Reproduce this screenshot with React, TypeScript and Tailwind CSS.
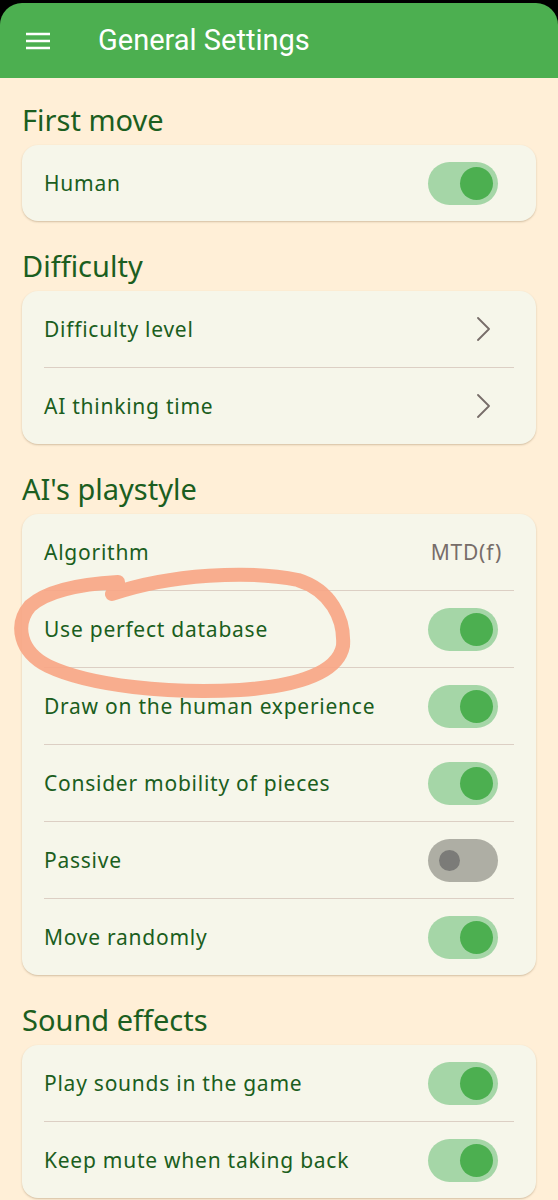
import React from "react"

type Row =
  | { label: string; kind: "toggle"; on: boolean }
  | { label: string; kind: "chevron" }
  | { label: string; kind: "value"; value: string }

const SECTIONS: { title: string; rows: Row[] }[] = [
  { title: "First move", rows: [{ label: "Human", kind: "toggle", on: true }] },
  {
    title: "Difficulty",
    rows: [
      { label: "Difficulty level", kind: "chevron" },
      { label: "AI thinking time", kind: "chevron" },
    ],
  },
  {
    title: "AI's playstyle",
    rows: [
      { label: "Algorithm", kind: "value", value: "MTD(f)" },
      { label: "Use perfect database", kind: "toggle", on: true },
      { label: "Draw on the human experience", kind: "toggle", on: true },
      { label: "Consider mobility of pieces", kind: "toggle", on: true },
      { label: "Passive", kind: "toggle", on: false },
      { label: "Move randomly", kind: "toggle", on: true },
    ],
  },
  {
    title: "Sound effects",
    rows: [
      { label: "Play sounds in the game", kind: "toggle", on: true },
      { label: "Keep mute when taking back", kind: "toggle", on: true },
    ],
  },
]

function Toggle({ on }: { on: boolean }) {
  return (
    <div
      className={`flex h-[43px] w-[70px] items-center rounded-full ${
        on ? "justify-end bg-[#a5d6a7] pr-[5px]" : "justify-start bg-[#aeaea4] pl-[11px]"
      }`}
    >
      {on ? (
        <div className="h-[33px] w-[33px] rounded-full bg-[#4caf50]" />
      ) : (
        <div className="h-[21px] w-[21px] rounded-full bg-[#7b7b78]" />
      )}
    </div>
  )
}

function Chevron() {
  return (
    <svg width="24" height="24" viewBox="0 0 24 24" className="mr-[2px]">
      <path d="M6 1 L17 12 L6 23" fill="none" stroke="#776d69" strokeWidth="1.8" strokeLinecap="round" strokeLinejoin="round" />
    </svg>
  )
}

function SettingRow({ row }: { row: Row }) {
  return (
    <div className="flex h-[76px] items-center justify-between pl-[22px] pr-[38px]">
      <span className="pt-[2px] text-[21px] tracking-[0.75px] text-[#1b5e20]">{row.label}</span>
      {row.kind === "toggle" && <Toggle on={row.on} />}
      {row.kind === "chevron" && <Chevron />}
      {row.kind === "value" && (
        <span className="-mr-[4px] pt-[2px] text-[21px] tracking-[0.75px] text-[#776d69]">{row.value}</span>
      )}
    </div>
  )
}

export default function App() {
  return (
    <div className="min-h-[1200px] bg-black pt-[3px] font-['Noto_Sans',sans-serif]">
      <header className="flex h-[75px] items-center rounded-t-[22px] bg-[#4caf50] px-[26px]">
        <svg width="24" height="18" viewBox="0 0 24 18">
          <path d="M0 2 H24 M0 9 H24 M0 16 H24" stroke="#ffffff" strokeWidth="2.4" />
        </svg>
        <h1 className="ml-[48px] font-['Roboto',sans-serif] text-[29px] font-normal text-white">
          General Settings
        </h1>
      </header>

      <main className="relative min-h-[1122px] bg-[#ffefd7] px-[22px] pt-[22px] pb-[20px]">
        {SECTIONS.map((section, i) => (
          <section key={section.title} className={i > 0 ? "mt-[25px]" : ""}>
            <h2 className="mb-[5px] text-[29px] leading-[40px] text-[#1b5e20]">{section.title}</h2>
            <div className="rounded-[16px] bg-[#f6f6ea] shadow-[0_1px_2px_rgba(110,80,40,0.3)]">
              {section.rows.map((row, j) => (
                <React.Fragment key={row.label}>
                  {j > 0 && <div className="mx-[22px] h-px bg-[#dccfc4]" />}
                  <SettingRow row={row} />
                </React.Fragment>
              ))}
            </div>
          </section>
        ))}

        {/* hand-drawn annotation over the "Use perfect database" row */}
        <svg
          className="pointer-events-none absolute left-0 top-[-78px]"
          width="558"
          height="1200"
          viewBox="0 0 558 1200"
        >
          <path
            d="M112 594 C 170 574, 250 570, 298 580 C 330 590, 345 618, 343 646 C 338 672, 300 686, 240 690 C 170 694, 90 686, 48 666 C 20 652, 14 625, 30 606 C 48 590, 80 584, 118 582"
            fill="none"
            stroke="#f7a685"
            strokeOpacity="0.92"
            strokeWidth="14"
            strokeLinecap="round"
            strokeLinejoin="round"
          />
        </svg>
      </main>
    </div>
  )
}
